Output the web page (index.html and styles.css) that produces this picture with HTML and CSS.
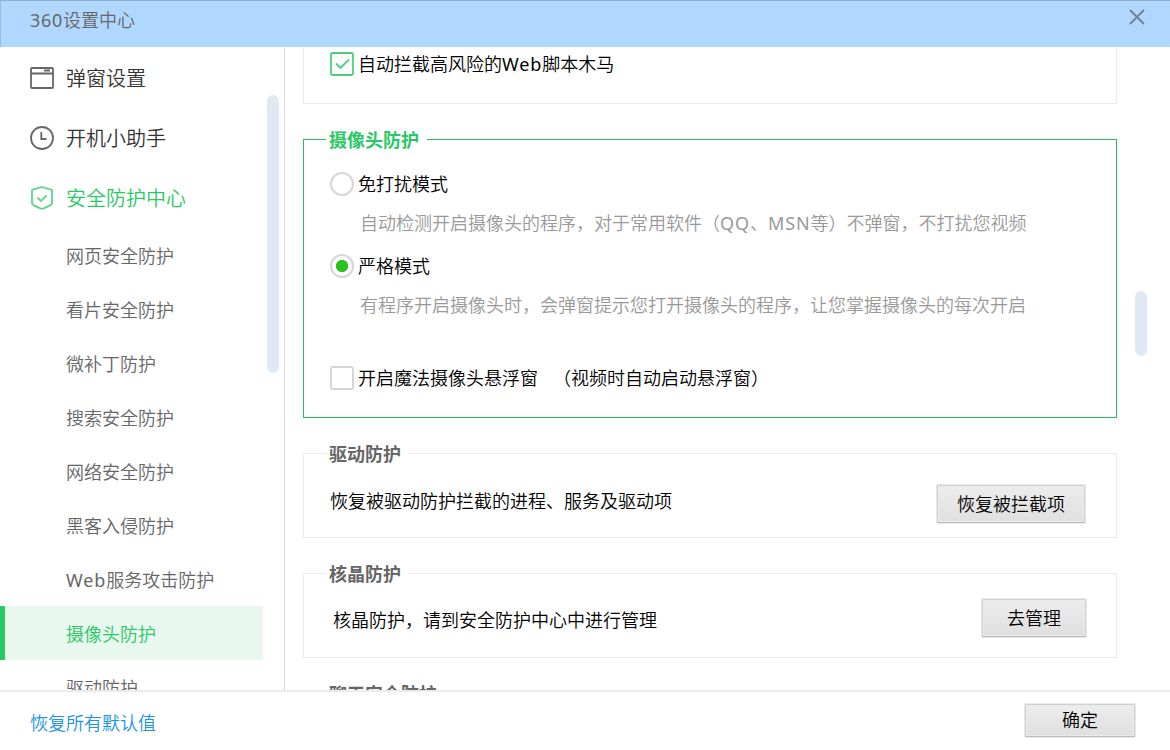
FILE: index.html
```html
<!DOCTYPE html>
<html lang="zh-CN">

<head>
  <meta charset="UTF-8">
  <meta name="viewport" content="width=device-width, initial-scale=1.0">
  <title>360设置中心</title>
  <link rel="stylesheet" href="styles.css">
</head>

<body>
  <header class="header">
    <h1 class="title"><span class="num">360</span>设置中心</h1>
    <svg class="close" width="16" height="16" viewBox="0 0 16 16">
      <path d="M1 1L15 15M15 1L1 15" />
    </svg>
  </header>

  <div class="main">
    <!-- 左侧菜单 -->
    <aside class="sidebar">
      <ul class="menu">
        <li class="menu-item">
          <svg class="icon" width="24" height="24" viewBox="0 0 24 24">
            <rect x="1" y="2" width="22" height="20" rx="1" />
            <path d="M1 7.5H23M14 4.5H20" />
          </svg>
          <span>弹窗设置</span>
        </li>
        <li class="menu-item">
          <svg class="icon" width="24" height="24" viewBox="0 0 24 24">
            <circle cx="12" cy="12" r="11" />
            <path d="M11.3 6V13H16.5" />
          </svg>
          <span>开机小助手</span>
        </li>
        <li class="menu-item on">
          <svg class="icon" width="24" height="24" viewBox="0 0 24 24">
            <path d="M12 1L22 4V17.5Q21 19.5 12 23Q3 19.5 2 17.5V4Z" />
            <path d="M7.5 11.5L11 15L16.5 9.5" />
          </svg>
          <span>安全防护中心</span>
        </li>
      </ul>
      <ul class="submenu">
        <li>网页安全防护</li>
        <li>看片安全防护</li>
        <li>微补丁防护</li>
        <li>搜索安全防护</li>
        <li>网络安全防护</li>
        <li>黑客入侵防护</li>
        <li><span class="en">Web</span>服务攻击防护</li>
        <li class="active">摄像头防护</li>
        <li>驱动防护</li>
      </ul>
      <div class="thumb"></div>
    </aside>

    <!-- 右侧设置项 -->
    <section class="content">
      <div class="box box-top">
        <div class="row">
          <svg class="check" width="24" height="24" viewBox="0 0 24 24">
            <rect class="check-on" x="1" y="1" width="22" height="22" rx="1.5" />
            <path class="check-on" d="M6 11.5L10.5 16L19 7.5" />
          </svg>
          <span>自动拦截高风险的<span class="en">Web</span>脚本木马</span>
        </div>
      </div>

      <fieldset class="box camera">
        <legend>摄像头防护</legend>
        <div class="row"><i class="radio"></i>免打扰模式</div>
        <p class="desc">自动检测开启摄像头的程序，对于常用软件（<span class="en">QQ</span>、<span class="en">MSN</span>等）不弹窗，不打扰您视频</p>
        <div class="row"><i class="radio checked"></i>严格模式</div>
        <p class="desc">有程序开启摄像头时，会弹窗提示您打开摄像头的程序，让您掌握摄像头的每次开启</p>
        <div class="row float-row"><i class="checkbox"></i>开启魔法摄像头悬浮窗<span class="tip">（视频时自动启动悬浮窗）</span></div>
      </fieldset>

      <fieldset class="box driver">
        <legend>驱动防护</legend>
        <p>恢复被驱动防护拦截的进程、服务及驱动项</p>
        <button class="btn">恢复被拦截项</button>
      </fieldset>

      <fieldset class="box core">
        <legend>核晶防护</legend>
        <p>核晶防护，请到安全防护中心中进行管理</p>
        <button class="btn">去管理</button>
      </fieldset>

      <fieldset class="box">
        <legend>聊天安全防护</legend>
      </fieldset>
      <div class="thumb"></div>
    </section>
  </div>

  <footer class="footer">
    <a class="reset">恢复所有默认值</a>
    <button class="btn ok">确定</button>
  </footer>
</body>

</html>
```
FILE: styles.css
```css
* {
  box-sizing: border-box;
  margin: 0;
  padding: 0;
}

body {
  display: flex;
  flex-direction: column;
  width: 1170px;
  height: 750px;
  overflow: hidden;
  background: #fff;
  color: #000;
  font: 350 18px/40px "Noto Sans", "Noto Sans CJK SC", sans-serif;
}

ul {
  list-style: none;
}

svg {
  fill: none;
  flex: none;
}

.en,
.num {
  font-weight: 400;
  letter-spacing: 0.9px;
}

.num {
  letter-spacing: 0.7px;
}

/* 标题栏 */
.header {
  display: flex;
  justify-content: space-between;
  height: 47px;
  padding: 0 25px 0 29px;
  border-top: 1px solid #8eaed2;
  border-left: 1px solid #98bce2;
  background: #b0d8ff;
}

.title {
  color: #666;
  font-size: 18px;
  font-weight: 350;
  line-height: 38px;
}

.close {
  margin-top: 8px;
  stroke: #70808f;
  stroke-width: 1.8;
}

.main {
  display: flex;
  height: 643px;
  padding-top: 1px;
}

/* 左侧 */
.sidebar {
  position: relative;
  width: 285px;
  overflow: hidden;
  border-right: 1px solid #d6d6d6;
}

.menu-item {
  display: flex;
  align-items: center;
  gap: 12px;
  height: 60px;
  padding-left: 30px;
  color: #333;
  font-size: 20px;
}

.menu-item span {
  padding-top: 1px;
}

.icon {
  stroke: #666;
  stroke-width: 1.8;
}

.on {
  color: #28c864;
}

.on .icon {
  stroke: #5fd68c;
}

.submenu li {
  width: 263px;
  height: 54px;
  padding-left: 66px;
  color: #666;
  line-height: 56px;
}

.submenu .active {
  padding-left: 61px;
  border-left: 5px solid #28c864;
  background: #e9f8ef;
  color: #28c864;
}

.thumb {
  position: absolute;
  border-radius: 6px;
  background: #dfe9f3;
}

.sidebar .thumb {
  top: 47px;
  right: 5px;
  width: 12px;
  height: 278px;
}

/* 右侧 */
.content {
  position: relative;
  flex: 1;
  overflow: hidden;
  padding: 0 53px 0 18px;
}

.content .thumb {
  top: 243px;
  right: 23px;
  width: 12px;
  height: 65px;
}

.box {
  height: 97px;
  margin-bottom: 23px;
  padding-left: 26px;
  border: 1px solid #ebebeb;
}

.box-top {
  height: 56px;
  border-top: 0;
}

.box-top .row {
  height: 32px;
}

legend {
  height: 25px;
  margin-left: -4px;
  padding: 0 8px 0 3px;
  color: #666;
  font-weight: bold;
  line-height: 27px;
}

.row {
  display: flex;
  align-items: center;
  gap: 4px;
  height: 40px;
}

.check-on {
  stroke: #4ccf7e;
  stroke-width: 1.8;
}

.radio,
.checkbox {
  width: 24px;
  height: 24px;
  border: 2px solid #d6d6d6;
  border-radius: 3px;
}

.radio {
  border-radius: 50%;
}

.checked {
  background: radial-gradient(circle, #2cc01e 5.7px, #fff 6.5px);
}

.camera {
  height: 291px;
  border-color: #28c05f;
}

.camera legend {
  margin-bottom: 12px;
  color: #28c864;
}

.desc {
  height: 42px;
  padding-left: 30px;
  color: #999;
  line-height: 38px;
  white-space: nowrap;
}

.float-row {
  margin-top: 30px;
}

.tip {
  margin-left: 11px;
}

.driver,
.core {
  display: flex;
  justify-content: space-between;
  align-items: flex-start;
  padding-right: 30px;
}

.driver p {
  margin-top: 15px;
}

.core {
  padding-left: 29px;
  padding-right: 29px;
}

.core p {
  margin-top: 14px;
}

.core legend {
  margin-left: -7px;
}

.btn {
  width: 150px;
  height: 40px;
  border: 1px solid #e9e9e9;
  border-radius: 2px;
  background: linear-gradient(#ededed, #dfdfdf);
  box-shadow: inset 0 -1px 0 #b9b9b9, inset 0 0 0 1px #cfcfcf, inset 0 0 0 2px #ececec;
  color: #000;
  font: inherit;
  line-height: 38px;
}

.driver .btn {
  margin-top: 18px;
}

.core .btn {
  width: 106px;
  margin-top: 12px;
}

/* 底部 */
.footer {
  display: flex;
  justify-content: space-between;
  align-items: flex-start;
  height: 60px;
  padding: 11px 34px 0 30px;
  border-top: 2px solid #ebebeb;
}

.reset {
  color: #1c93e8;
}

.footer .ok {
  width: 112px;
  height: 35px;
  line-height: 33px;
}
```
